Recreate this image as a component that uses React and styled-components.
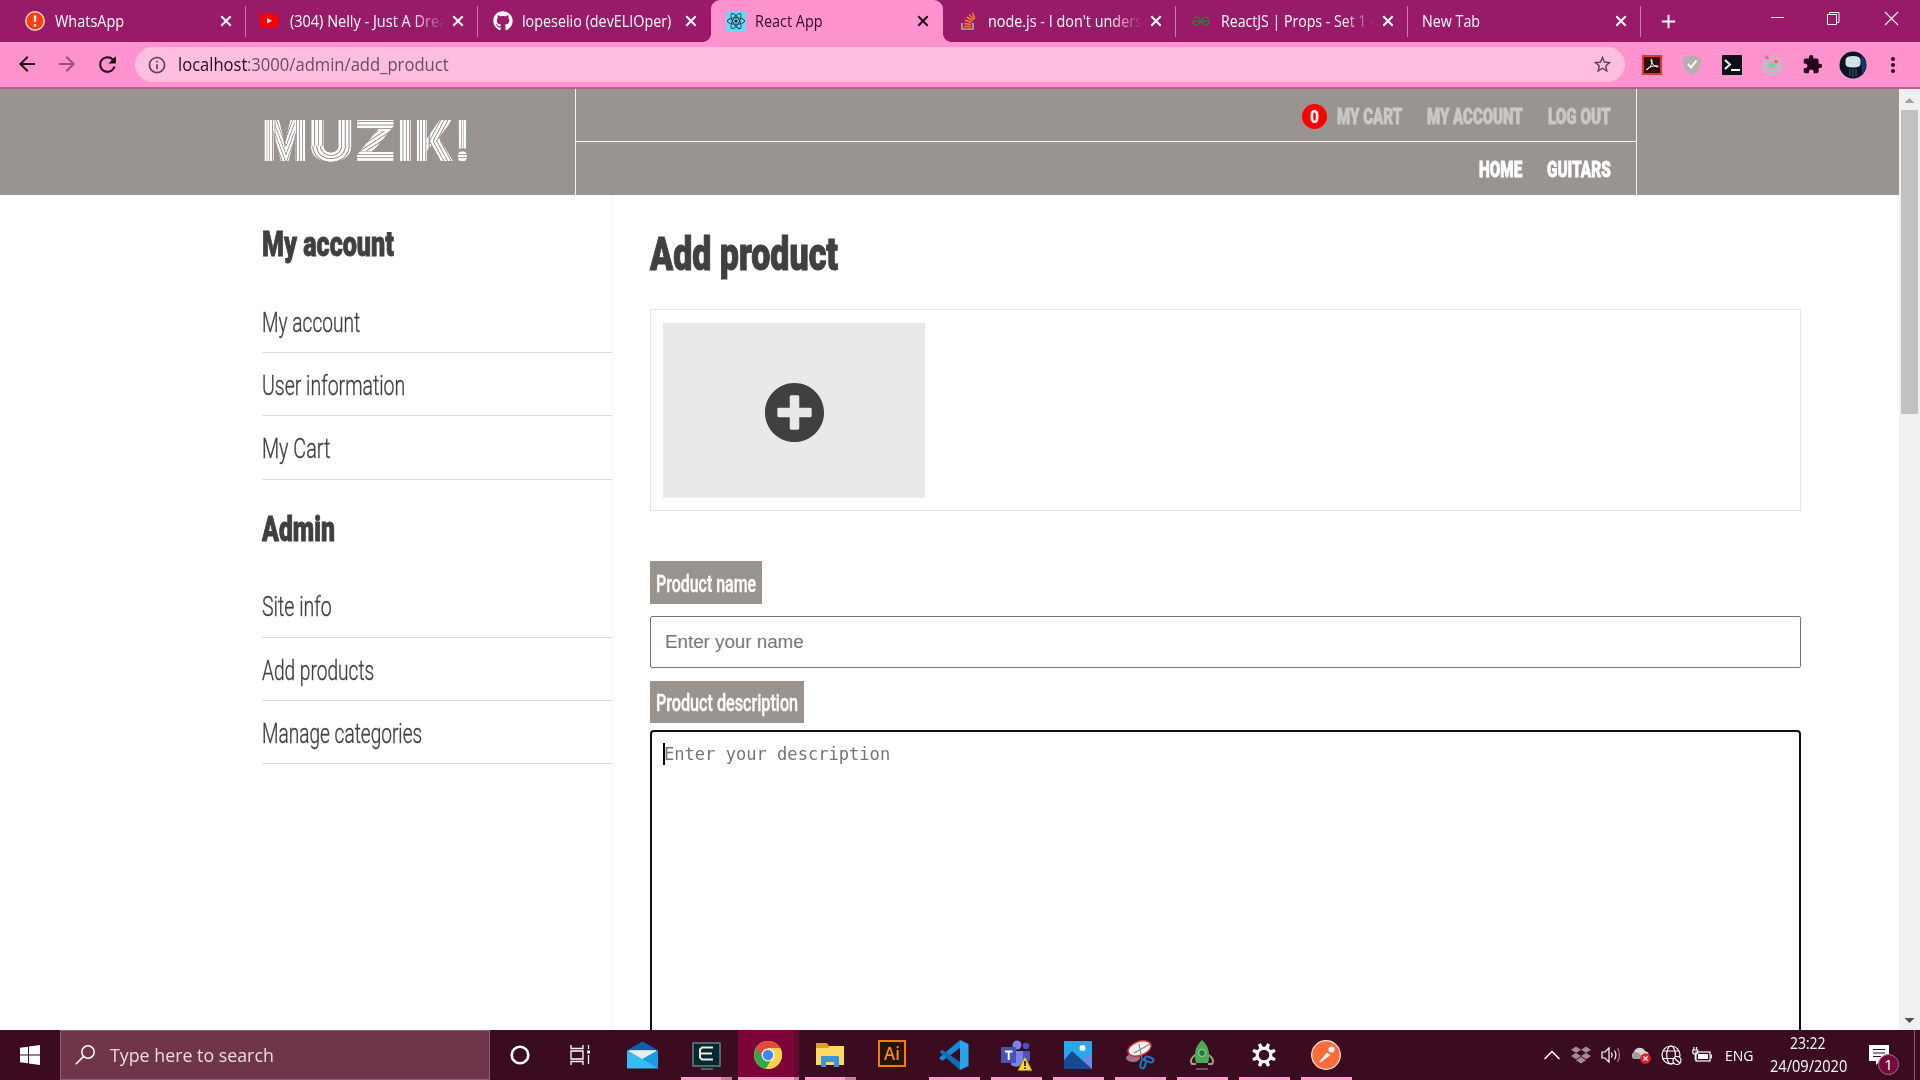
import React, { useLayoutEffect, useRef, useState } from "react";
import styled, { createGlobalStyle } from "styled-components";
import { FaPlusCircle, FaGithub, FaReact, FaDropbox } from "react-icons/fa";
import { MdArrowBack, MdArrowForward, MdRefresh, MdInfoOutline, MdStarBorder, MdAdd, MdMoreVert, MdExtension } from "react-icons/md";
import { SiGeeksforgeeks } from "react-icons/si";

const display = `Roboto, "Open Sans", "Liberation Sans", sans-serif`;
const system = `"Open Sans", "Noto Sans", "Liberation Sans", sans-serif`;

const Global = createGlobalStyle`
  * { box-sizing: border-box; }
  body { margin: 0; overflow: hidden; background: #fff; }
  svg { display: block; flex: none; }
`;

const Screen = styled.div`
  width: 1920px;
  height: 1080px;
  display: flex;
  flex-direction: column;
  overflow: hidden;
  background: #fff;
`;

/* Text condensed or widened to a set advance width */
const FitBox = styled.span`
  display: block;
  flex: none;
  width: ${(p) => p.$w}px;
  height: ${(p) => p.$lh}px;
  line-height: ${(p) => p.$lh}px;
  font-family: ${(p) => p.$font || display};
  font-size: ${(p) => p.$size}px;
  font-weight: ${(p) => p.$weight || 400};
  color: ${(p) => p.$color || "#404040"};
  white-space: pre;
`;
const FitInner = styled.span`
  display: inline-block;
  transform-origin: 0 50%;
  -webkit-text-stroke: ${(p) => p.$stroke || 0}px currentColor;
`;
function Fit({ w, lh, size, weight, color, font, stroke, children }) {
  const ref = useRef(null);
  const [scale, setScale] = useState(1);
  useLayoutEffect(() => {
    setScale(w / ref.current.offsetWidth);
  }, [w]);
  return (
    <FitBox $w={w} $lh={lh} $size={size} $weight={weight} $color={color} $font={font}>
      <FitInner ref={ref} $stroke={stroke} style={{ transform: `scaleX(${scale})` }}>{children}</FitInner>
    </FitBox>
  );
}

/* ---------- Browser tabs ---------- */
const TabStrip = styled.div`
  height: 42px;
  flex: none;
  display: flex;
  padding-left: 13px;
  background: #991a68;
`;
const Tab = styled.div`
  position: relative;
  width: 232.5px;
  height: 42px;
  flex: none;
  display: flex;
  align-items: center;
  padding-left: ${(p) => p.$pad}px;
  padding-right: 14px;
  color: ${(p) => (p.$active ? "#1c0613" : "#fff")};
  background: ${(p) => (p.$active ? "#ff93cf" : "transparent")};
  border-radius: 9px 9px 0 0;
  &::before, &::after {
    content: "";
    display: ${(p) => (p.$active ? "block" : "none")};
    position: absolute;
    bottom: 0;
    width: 8px;
    height: 8px;
  }
  &::before { left: -8px; background: radial-gradient(circle at 0 0, transparent 7.5px, #ff93cf 8px); }
  &::after { right: -8px; background: radial-gradient(circle at 100% 0, transparent 7.5px, #ff93cf 8px); }
`;
const Divider = styled.i`
  width: 1px;
  height: 31px;
  margin-left: -1px;
  margin-top: 1px;
  align-self: center;
  background: #c67ba9;
`;
const Favicon = styled.span`
  width: ${(p) => p.$w}px;
  display: flex;
  justify-content: center;
  flex: none;
`;
const TabTitle = styled.span`
  flex: 1;
  overflow: hidden;
  margin-right: 7px;
  ${(p) => p.$fade && "mask-image: linear-gradient(90deg, #000 78%, transparent 100%);"}
`;
const NewTab = styled.span`
  display: flex;
  align-items: center;
  color: #fff;
  padding-left: 16px;
  flex: 1;
`;
const WindowButtons = styled.div`
  display: flex;
  padding: 9px 20px 0 0;
  gap: 39px;
`;

/* ---------- Address bar ---------- */
const Toolbar = styled.div`
  height: 47px;
  flex: none;
  display: flex;
  align-items: center;
  padding: 0 7px 0 15px;
  background: #ff93cf;
  border-bottom: 2px solid #b26490;
`;
const NavButtons = styled.div`
  display: flex;
  gap: 16px;
  width: 120px;
  color: #23040f;
`;
const Faded = styled.span`opacity: 0.45;`;
const AddressField = styled.div`
  width: 1490px;
  height: 35px;
  border-radius: 18px;
  background: #ffbde0;
  display: flex;
  align-items: center;
  padding: 0 12px 0 12px;
  color: #5b4351;
`;
const UrlText = styled.span`
  display: flex;
  flex: 1;
  padding-left: 11px;
`;
const Extensions = styled.div`
  display: grid;
  grid-template-columns: repeat(7, 40.1px);
  place-items: center;
  padding-left: 7px;
`;

/* ---------- Page ---------- */
const Viewport = styled.div`
  height: 941px;
  flex: none;
  display: flex;
  overflow: hidden;
`;
const Page = styled.div`
  width: 1899px;
  height: 941px;
  overflow: hidden;
`;
const Scrollbar = styled.div`
  width: 21px;
  background: #f0f0f0;
  display: flex;
  flex-direction: column;
  align-items: center;
`;
const ScrollArrow = styled.i`
  width: 10px;
  height: 5px;
  margin: ${(p) => (p.$down ? "7px 0" : "9px 0 7px")};
  background: ${(p) => (p.$down ? "#505050" : "#a3a3a3")};
  clip-path: ${(p) => (p.$down ? "polygon(0 0, 100% 0, 50% 100%)" : "polygon(50% 0, 100% 100%, 0 100%)")};
`;
const Thumb = styled.i`
  width: 17px;
  height: 304px;
  margin-bottom: auto;
  background: #c1c1c1;
`;
const Header = styled.header`
  height: 106px;
  background: #999490;
  display: flex;
`;
const Brand = styled.div`
  width: 575px;
  padding: 19px 0 0 262px;
  display: flex;
`;
const HeaderNav = styled.nav`
  width: 1062px;
  border: solid #f4f4f3;
  border-width: 0 1px;
`;
const NavRow = styled.div`
  height: 53px;
  display: flex;
  justify-content: flex-end;
  align-items: flex-start;
  gap: 25px;
  padding-right: 25px;
  border-bottom: ${(p) => (p.$line ? "1px solid #fff" : "none")};
`;
const CartLink = styled.span`
  display: flex;
  gap: 10px;
`;
const CartCount = styled.span`
  width: 25px;
  height: 25px;
  margin-top: 15px;
  border-radius: 50%;
  background: #f00;
  display: flex;
  justify-content: center;
`;

const LogoCell = styled.span`
  width: ${(p) => p.$w}px;
  height: 66px;
  flex: none;
  font: 900 57px/66px Inter, "Liberation Sans", sans-serif;
  white-space: pre;
`;
const LogoLetter = styled.span`
  display: inline-block;
  height: 66px;
  transform-origin: 0 50%;
  color: transparent;
  background: ${(p) => p.$fill};
  -webkit-background-clip: text;
  background-clip: text;
`;
function Letter({ w, fill, children }) {
  const ref = useRef(null);
  const [scale, setScale] = useState(1);
  useLayoutEffect(() => setScale(w / ref.current.offsetWidth), [w]);
  return (
    <LogoCell $w={w}>
      <LogoLetter ref={ref} $fill={fill} style={{ transform: `scaleX(${scale})` }}>{children}</LogoLetter>
    </LogoCell>
  );
}
const bands = "#fff 0, #fff 1.8px, #a29d99 2.3px, #a29d99 2.8px, #fff 3.4px";
const stripes = (angle) => `repeating-linear-gradient(${angle}deg, ${bands})`;
const at = (image, x, y, w, h) => `${image} ${x} ${y} / ${w} ${h} no-repeat`;
const logo = [
  { ch: "M", w: 46, fill: [
    at(stripes(90), "0", "0", "28%", "100%"),
    at(stripes(90), "100%", "0", "28%", "100%"),
    at(stripes(66), "39%", "0", "23%", "100%"),
    at(stripes(114), "66%", "0", "23%", "100%"),
  ].join(", ") },
  { ch: "U", w: 46, fill: [
    at(stripes(90), "0", "0", "100%", "38px"),
    at(`repeating-radial-gradient(circle at 50% 0, ${bands})`, "0", "38px", "100%", "28px"),
  ].join(", ") },
  { ch: "Z", w: 43, fill: [
    at(stripes(0), "0", "0", "100%", "23px"),
    at(stripes(0), "0", "43px", "100%", "23px"),
    at(stripes(145), "0", "23px", "100%", "20px"),
  ].join(", ") },
  { ch: "I", w: 17, fill: stripes(90) },
  { ch: "K", w: 40, fill: [
    at(stripes(90), "0", "0", "38%", "100%"),
    at(stripes(120), "100%", "0", "62%", "33px"),
    at(stripes(60), "100%", "33px", "62%", "33px"),
  ].join(", ") },
  { ch: "!", w: 17, fill: [
    at(stripes(90), "0", "0", "100%", "42px"),
    at(stripes(0), "0", "42px", "100%", "24px"),
  ].join(", ") },
];

const Body = styled.div`
  display: flex;
  height: 835px;
`;
const Sidebar = styled.aside`
  width: 613px;
  flex: none;
  padding-left: 262px;
  border-right: 1px solid #f5f5f5;
`;
const SideHeading = styled.h2`
  height: 94.8px;
  margin: 0;
`;
const SideRow = styled.div`
  height: 63.3px;
  border-bottom: 1px solid #dcdcdc;
`;
const Content = styled.main`
  width: 1188px;
  flex: none;
  padding-left: 37px;
`;
const Title = styled.h1`
  margin: 0;
  height: 114px;
`;
const Uploads = styled.section`
  height: 202px;
  border: 1px solid #e3e3e3;
  padding: 13px 12px;
`;
const AddTile = styled.div`
  width: 262px;
  height: 175px;
  padding-top: 4px;
  background: #e9e9e9;
  display: flex;
  align-items: center;
  justify-content: center;
  color: #404040;
`;
const Label = styled.label`
  display: block;
  width: ${(p) => p.$w}px;
  height: ${(p) => p.$h}px;
  margin-top: ${(p) => p.$mt}px;
  padding-left: 6px;
  background: #999490;
`;
const Field = styled.div`
  height: 52px;
  margin-top: 12px;
  border: 1px solid #757575;
  border-radius: 2px;
  padding-left: 14px;
`;
const TextArea = styled.div`
  height: 400px;
  margin-top: 7px;
  border: 2px solid #101010;
  border-radius: 4px;
  padding: 11px 0 0 11px;
  display: flex;
`;
const Caret = styled.i`
  width: 2px;
  height: 22px;
  margin-right: -1px;
  background: #000;
`;

/* ---------- Taskbar ---------- */
const Taskbar = styled.footer`
  height: 50px;
  flex: none;
  display: flex;
  background: #3b0b20;
`;
const StartButton = styled.div`
  width: 60px;
  display: flex;
  align-items: center;
  justify-content: center;
`;
const SearchBox = styled.div`
  width: 430px;
  border: 1px solid #8f6073;
  background: #70344b;
  display: flex;
  align-items: center;
  gap: 15px;
  padding-left: 14px;
`;
const TaskItem = styled.div`
  position: relative;
  width: ${(p) => p.$w || 62}px;
  flex: none;
  display: flex;
  align-items: center;
  justify-content: center;
  &::before {
    content: "";
    position: absolute;
    z-index: 0;
    top: 0;
    left: 1px;
    width: 61px;
    height: 50px;
    background: linear-gradient(90deg, #7d0439 56px, #620930 56px);
    display: ${(p) => (p.$current ? "block" : "none")};
  }
  &::after {
    content: "";
    position: absolute;
    left: ${(p) => (p.$current ? 1 : 6)}px;
    bottom: 0;
    width: ${(p) => (p.$current ? 61 : 51)}px;
    height: 3px;
    background: ${(p) => (p.$stack ? `linear-gradient(90deg, #ff9fca ${p.$current ? 56 : 40}px, #c87f9f ${p.$current ? 56 : 40}px)` : "#ff9fca")};
    display: ${(p) => (p.$open ? "block" : "none")};
  }
  svg { position: relative; z-index: 1; }
`;
const Tray = styled.div`
  margin-left: auto;
  padding-right: 5px;
  display: flex;
  align-items: center;
  gap: 10px;
`;
const Language = styled.span`margin-left: 3px;`;
const Clock = styled.div`
  display: flex;
  flex-direction: column;
  align-items: center;
  width: 78px;
  margin-left: 5px;
`;
const Notices = styled.div`
  width: 46px;
  height: 50px;
  margin-left: 12px;
  padding: 14px 0 0 0;
  border-right: 1px solid #806070;
`;
const AiBadge = styled.span`
  width: 28px;
  height: 27px;
  margin-top: -3px;
  border: 2px solid #f57c00;
  background: #271400;
  display: flex;
  justify-content: center;
`;

const CloseX = () => (
  <svg width="12" height="12" viewBox="0 0 12 12" stroke="currentColor" strokeWidth="2"><path d="M1.300 1.300l9.400 9.400M10.700 1.300l-9.400 9.400" /></svg>
);

const WhatsAppIcon = () => (
  <svg width="20" height="20" viewBox="0 0 20 20"><circle cx="10" cy="10" r="9.2" fill="#ff3d0d" stroke="#ffd9c9" strokeWidth="1.5" /><path d="M10 4.5v6.5M10 13v2.4" stroke="#fff" strokeWidth="2.3" /></svg>
);
const YouTubeIcon = () => (
  <svg width="18" height="14" viewBox="0 0 18 14"><rect width="18" height="13.5" rx="3" fill="#f00" /><path d="M7 4l5 2.8L7 9.6z" fill="#fff" /></svg>
);
const ReactIcon = () => (
  <svg width="20" height="20" viewBox="0 0 20 20"><rect width="20" height="20" rx="2" fill="#61dafb" /><g transform="translate(1 1)"><FaReact size={18} color="#17232b" /></g></svg>
);
const StackIcon = () => (
  <svg width="15" height="18" viewBox="0 0 15 18" fill="none">
    <path d="M1 11v6h11v-6" stroke="#b7a4ae" strokeWidth="1.7" />
    <path d="M3 14.4h7M3.2 11.4l6.9 1M4 8.2l6.6 2.3M5.8 5l5.8 3.8M8.3 2.4l4.4 5.2M11.7.6l2 6.4" stroke="#f48024" strokeWidth="1.5" />
  </svg>
);

const tabs = [
  { title: "WhatsApp", w: 69, pad: 12, iw: 20, icon: <WhatsAppIcon /> },
  { title: "(304) Nelly - Just A Drea", w: 157, pad: 14, iw: 18, icon: <YouTubeIcon />, fade: true },
  { title: "lopeselio (devELIOper)", w: 149, pad: 15, iw: 20, icon: <FaGithub size={20} /> },
  { title: "React App", w: 68, pad: 15, iw: 20, icon: <ReactIcon />, active: true },
  { title: "node.js - I don't unders", w: 154, pad: 17, iw: 17, icon: <StackIcon />, fade: true },
  { title: "ReactJS | Props - Set 1 -", w: 154, pad: 16, iw: 18, icon: <SiGeeksforgeeks size={18} color="#2f7a44" />, fade: true },
  { title: "New Tab", w: 58, pad: 14, iw: 0 },
];

function Tabs() {
  return (
    <TabStrip>
      {tabs.map((t, i) => (
        <React.Fragment key={t.title}>
          <Tab $pad={t.pad} $active={t.active}>
            {t.icon && <Favicon $w={t.iw}>{t.icon}</Favicon>}
            <TabTitle $fade={t.fade} style={{ marginLeft: t.icon ? (i > 3 ? 45 : i > 0 ? 44 : 42) - t.pad - t.iw : 0 }}>
              <Fit w={t.w} size={15.500} lh={39} font={system} color={t.active ? "#2a0c1e" : "#fff"}>{t.title}</Fit>
            </TabTitle>
            <CloseX />
          </Tab>
          {i !== 2 && i !== 3 && <Divider />}
        </React.Fragment>
      ))}
      <NewTab><MdAdd size={23} /></NewTab>
      <WindowButtons>
        <svg width="18" height="18"><path d="M3 8.5h13" stroke="#fff" /></svg>
        <svg width="18" height="18" fill="none" stroke="#fff"><path d="M2.5 5.5h9v10h-9zM4.500 5.500v-2h9.500v10h-2.500" /></svg>
        <svg width="18" height="18" stroke="#fff" strokeWidth="1.1"><path d="M3 3l13 13M16 3L3 16" /></svg>
      </WindowButtons>
    </TabStrip>
  );
}

function AddressBar() {
  return (
    <Toolbar>
      <NavButtons>
        <MdArrowBack size={24} />
        <Faded><MdArrowForward size={24} /></Faded>
        <MdRefresh size={25} />
      </NavButtons>
      <AddressField>
        <MdInfoOutline size={20} />
        <UrlText>
          <Fit w={69} size={18} lh={33} font={system} color="#1d1018">localhost</Fit>
          <Fit w={202} size={18} lh={33} font={system} color="#6b4d60">:3000/admin/add_product</Fit>
        </UrlText>
        <MdStarBorder size={21} />
      </AddressField>
      <Extensions>
        <svg width="20" height="20" viewBox="0 0 20 20"><rect x="1" y="1" width="18" height="18" fill="#300b0e" stroke="#e5322d" strokeWidth="2" /><path d="M4.500 15c3-1 6-6 5.500-10-.3-1.500-1.300-.8-1 .5.800 3.500 3.500 6 6 6.500 1.500.2 1.500-1.200 0-1.200-3-.2-7.500 1-9.800 3-.8.800-1 1.200-.7 1.200z" fill="none" stroke="#fff" /></svg>
        <svg width="20" height="20" viewBox="0 0 20 20"><path d="M10 0l9 3c.3 8-2 13-9 17C3 16 .7 11 1 3z" fill="#b0b0ae" /><path d="M6 9l3 3.500 5.500-7" stroke="#fff" strokeWidth="2" fill="none" /></svg>
        <svg width="20" height="20" viewBox="0 0 20 20"><rect width="20" height="20" rx="1" fill="#0a1016" /><path d="M3 5l5 4.500L3 14M9 15h9" stroke="#fff" strokeWidth="2" fill="none" /></svg>
        <svg width="20" height="20" viewBox="0 0 20 20" fill="none" stroke="#8bd9b9" strokeWidth="1.400"><circle cx="10" cy="10.500" r="8.800" /><circle cx="10" cy="10.500" r="5.700" /><circle cx="10" cy="10.500" r="3" fill="#58e39c" stroke="none" /><circle cx="5" cy="2.500" r="1.600" fill="#ff5a3c" stroke="none" /><circle cx="14" cy="6.500" r="1.800" fill="#ff5a3c" stroke="none" /></svg>
        <MdExtension size={21} color="#28041a" />
        <svg width="28" height="28" viewBox="0 0 28 28"><circle cx="14" cy="14" r="13.500" fill="#0b1124" /><path d="M22 4a13.500 13.500 0 0 1 1 20z" fill="#173a62" /><path d="M6.500 9q0-4 7.500-4t7.500 4v4q0 3.500-7.500 3.500T6.500 13z" fill="#cfe0e8" /><path d="M11 18v7M14 18v8M17 18v7" stroke="#29465c" strokeWidth="1.600" /></svg>
        <MdMoreVert size={24} color="#28041a" />
      </Extensions>
    </Toolbar>
  );
}

const NavText = ({ w, color = "#c8c8c8", lh = 55, children }) => (
  <Fit w={w} size={22} lh={lh} weight={900} color={color} stroke={0.8}>{children}</Fit>
);

function SiteHeader() {
  return (
    <Header>
      <Brand>
        {logo.map((l) => <Letter key={l.ch} w={l.w} fill={l.fill}>{l.ch}</Letter>)}
      </Brand>
      <HeaderNav>
        <NavRow $line>
          <CartLink>
            <CartCount><Fit w={9} size={19} lh={25} weight={900} color="#fff">0</Fit></CartCount>
            <NavText w={65}>MY CART</NavText>
          </CartLink>
          <NavText w={96}>MY ACCOUNT</NavText>
          <NavText w={63}>LOG OUT</NavText>
        </NavRow>
        <NavRow>
          <NavText w={43} color="#fff">HOME</NavText>
          <NavText w={64} color="#fff">GUITARS</NavText>
        </NavRow>
      </HeaderNav>
    </Header>
  );
}

const menus = [
  { heading: ["My account", 132], rows: [["My account", 98], ["User information", 143], ["My Cart", 68]] },
  { heading: ["Admin", 73], rows: [["Site info", 70], ["Add products", 112], ["Manage categories", 160]] },
];

function SideMenu() {
  return (
    <Sidebar>
      {menus.map(({ heading, rows }) => (
        <React.Fragment key={heading[0]}>
          <SideHeading><Fit w={heading[1]} size={35} lh={100} weight={900} stroke={0.9}>{heading[0]}</Fit></SideHeading>
          {rows.map(([text, w]) => (
            <SideRow key={text}><Fit w={w} size={28.500} lh={66} weight={300} stroke={0.35}>{text}</Fit></SideRow>
          ))}
        </React.Fragment>
      ))}
    </Sidebar>
  );
}

function ProductForm() {
  return (
    <Content>
      <Title><Fit w={188} size={47} lh={117} weight={900} stroke={1.1}>Add product</Fit></Title>
      <Uploads><AddTile><FaPlusCircle size={61} /></AddTile></Uploads>
      <Label $w={112} $h={43} $mt={50}><Fit w={100} size={23} lh={48} weight={500} stroke={0.4} color="#fff">Product name</Fit></Label>
      <Field><Fit w={139} size={18.75} lh={49} color="#757575" font={`"Liberation Sans", Arial, sans-serif`}>Enter your name</Fit></Field>
      <Label $w={154} $h={42} $mt={13}><Fit w={142} size={23} lh={45} weight={500} stroke={0.4} color="#fff">Product description</Fit></Label>
      <TextArea>
        <Caret />
        <Fit w={226} size={17} lh={22} color="#757575" font={`"DejaVu Sans Mono", monospace`}>Enter your description</Fit>
      </TextArea>
    </Content>
  );
}

function Desktop() {
  return (
    <Taskbar>
      <StartButton>
        <svg width="20" height="20" viewBox="0 0 20 20" fill="#fff"><path d="M0 2.800l8-1.100v7.800H0zM9 1.500L20 0v9.500H9zM0 10.500h8v7.800l-8-1.100zM9 10.500h11V20L9 18.500z" /></svg>
      </StartButton>
      <SearchBox>
        <svg width="20" height="20" viewBox="0 0 20 20" fill="none" stroke="#fff" strokeWidth="1.500"><circle cx="13" cy="7" r="6.200" /><path d="M8.600 11.400L.8 19.300" /></svg>
        <Fit w={164} size={19} lh={47} font={system} color="#eadbe2">Type here to search</Fit>
      </SearchBox>
      <TaskItem $w={60}><svg width="20" height="20"><circle cx="10" cy="10" r="8.300" fill="none" stroke="#fff" strokeWidth="2.600" /></svg></TaskItem>
      <TaskItem $w={60}><svg width="20" height="20" fill="none" stroke="#fff" strokeWidth="1.300"><path d="M1 0v3.500h12V0M1 20v-3.500h12V20M1 6h12v8H1zM18.500 0v4M18.500 10v9" /><path d="M17.200 5.500h3v3h-3z" fill="#fff" stroke="none" /></svg></TaskItem>
      <TaskItem $w={65}><svg width="31" height="28" viewBox="0 0 32 28"><path d="M0 9L16 0l16 9v6H0z" fill="#0b5fb5" /><path d="M2 9h28v13H2z" fill="#ededed" /><path d="M0 9l16 9L32 9v19H0z" fill="#35bdf2" /><path d="M16 18l16 10V9z" fill="#1b9ae4" /></svg></TaskItem>
      <TaskItem $open $stack><svg width="29" height="29" viewBox="0 0 29 29"><rect x="1" y="2" width="27" height="23" fill="#022a35" stroke="#5f8583" strokeWidth="1.500" /><path d="M21 6.500H10L8 8.500v8l2 2h11M8 12.500h12" stroke="#f0e9d2" strokeWidth="2" fill="none" /><path d="M9 28h12" stroke="#4c8080" strokeWidth="1.500" /></svg></TaskItem>
      <TaskItem $open $stack $current>
        <svg width="28" height="28" viewBox="0 0 28 28"><circle cx="14" cy="14" r="14" fill="#fdd24b" /><path d="M14 14L1.900 7A14 14 0 0 0 12 27.800L18.500 17z" fill="#2fa650" /><path d="M1.900 7a14 14 0 0 1 24.200 0H14v7l-5 3z" fill="#e24a3b" /><path d="M26.100 7A14 14 0 0 1 12 27.800L20 14 17.500 8 14 7z" fill="#fdd24b" /><circle cx="14" cy="14" r="6.500" fill="#fff" /><circle cx="14" cy="14" r="5.200" fill="#4385f5" /></svg>
      </TaskItem>
      <TaskItem $open $stack><svg width="28" height="24" viewBox="0 0 28 24"><path d="M0 0h11l2 3h14v8H0z" fill="#dfa01a" /><path d="M0 5h12l2-2h14v19H0z" fill="#ffd866" /><path d="M5 24V14q0-1 1-1h16q1 0 1 1v10h-5v-5h-8v5z" fill="#3a93dd" /></svg></TaskItem>
      <TaskItem><AiBadge><Fit w={16} size={18} lh={23} weight={600} color="#f88b12" font={system}>Ai</Fit></AiBadge></TaskItem>
      <TaskItem $open><svg width="30" height="30" viewBox="0 0 30 30"><path d="M21 0v8L4 20.500 2.500 20.500.5 18.500v-1z" fill="#1789d5" /><path d="M.5 12l2-2h1.500L21 22v8z" fill="#0b70b8" /><path d="M21 0l8.500 4v22L21 30z" fill="#29a3ee" /></svg></TaskItem>
      <TaskItem $open><svg width="31" height="31" viewBox="0 0 31 31"><circle cx="16" cy="5" r="4.500" fill="#7b83eb" /><circle cx="25" cy="6" r="3.200" fill="#4b53bc" /><path d="M20 11h9v9q-3 5-9 3z" fill="#4b53bc" /><path d="M9 11h13v10q-4 9-12 4z" fill="#7b83eb" /><rect y="7" width="15" height="16" rx="1" fill="#4951b8" /><path d="M4 11.500h7.500M7.700 11.500v8.500" stroke="#fff" strokeWidth="2" /><path d="M24 17l7 13.500H17z" fill="#ffd91c" stroke="#a98900" strokeWidth=".6" /><path d="M24 21v5M24 27.500v1.500" stroke="#111" strokeWidth="1.700" /></svg></TaskItem>
      <TaskItem $open><svg width="28" height="28" viewBox="0 0 28 28"><rect width="28" height="28" rx="1" fill="#27a8ea" /><path d="M15 28l8-16 5 5v11z" fill="#6e86e8" /><path d="M0 19l8-9 20 18H0z" fill="#17498e" /><circle cx="18.500" cy="7" r="3" fill="#fff" /></svg></TaskItem>
      <TaskItem $open><svg width="30" height="30" viewBox="0 0 30 30"><ellipse cx="8" cy="18" rx="7" ry="4" fill="#9a7785" /><ellipse cx="14.500" cy="8.500" rx="12" ry="7" transform="rotate(-20 14.500 8.500)" fill="#f6f0f0" stroke="#d52c38" strokeWidth="1.500" /><path d="M14 4l3 15M25 4L9 13" stroke="#8b8b8b" strokeWidth="1.200" /><ellipse cx="18" cy="24" rx="2.400" ry="4.500" transform="rotate(15 18 24)" fill="none" stroke="#1d78c4" strokeWidth="2" /><ellipse cx="24" cy="19.500" rx="4.500" ry="2.400" transform="rotate(20 24 19.500)" fill="none" stroke="#1d78c4" strokeWidth="2" /></svg></TaskItem>
      <TaskItem $open><svg width="24" height="30" viewBox="0 0 24 30"><path d="M5 15q-6 5-3 9h4M19 15q6 5 3 9h-4" stroke="#9da27d" strokeWidth="2" fill="none" /><path d="M12 0q10 9 6 23H6Q2 9 12 0z" fill="#48ad51" /><circle cx="12" cy="13" r="3.500" fill="#247a34" stroke="#b5d2a8" /><path d="M6 29h12" stroke="#74515f" strokeWidth="2" /></svg></TaskItem>
      <TaskItem $open><svg width="24" height="24" viewBox="0 0 24 24"><circle cx="12" cy="12" r="6.800" fill="none" stroke="#fff" strokeWidth="3" />{[0, 45, 90, 135, 180, 225, 270, 315].map((a) => <path key={a} d="M10 4.500l.5-4.500h3l.5 4.500z" fill="#fff" transform={`rotate(${a + 22.5} 12 12)`} />)}</svg></TaskItem>
      <TaskItem $open><svg width="30" height="30" viewBox="0 0 30 30"><circle cx="15" cy="15" r="14.300" fill="#ff6c37" stroke="#ffe9df" strokeWidth="1.200" /><path d="M7 23l9-11 4 3-10 7.500z" fill="#fff" stroke="#d9562b" strokeWidth=".6" /><circle cx="20.500" cy="9.500" r="3" fill="#fff" /></svg></TaskItem>
      <Tray>
        <svg width="18" height="18" fill="none" stroke="#fff" strokeWidth="1.500"><path d="M1.500 13L9 5.500 16.500 13" /></svg>
        <FaDropbox size={20} color="#a48b97" />
        <svg width="20" height="18" viewBox="0 0 20 18" fill="none" stroke="#fff" strokeWidth="1.200"><path d="M1 6h3l4-4v14l-4-4H1z" /><path d="M10.500 6.500q1.500 2.500 0 5M13.500 4.500q2.800 4.500 0 9" /><path d="M16.500 2q4 7 0 14" stroke="#9b7f8b" /></svg>
        <svg width="20" height="18" viewBox="0 0 20 18"><path d="M3 13a4 4 0 0 1 0-7 6 6 0 0 1 11-1 5 5 0 0 1 3 8z" fill="#d9d2d6" /><path d="M3 13a4 4 0 0 1 1-7q5 0 8 7z" fill="#a69ba1" /><circle cx="14.500" cy="12.500" r="5.300" fill="#e11f2d" /><path d="M12.500 10.500l4 4M16.500 10.500l-4 4" stroke="#fff" strokeWidth="1.300" /></svg>
        <svg width="21" height="20" viewBox="0 0 21 20" fill="none" stroke="#fff" strokeWidth="1.200"><circle cx="10" cy="10" r="9" /><ellipse cx="10" cy="10" rx="4.300" ry="9" /><path d="M2 6h16M2 13.500h12" /><circle cx="16" cy="15.500" r="4" fill="#3b0b20" /><path d="M13.300 13l5.400 5" /></svg>
        <svg width="20" height="16" viewBox="0 0 20 16" fill="none" stroke="#fff" strokeWidth="1.200"><rect x="4" y="5" width="14" height="9" /><rect x="6" y="7" width="10" height="5" fill="#fff" stroke="none" /><path d="M19.300 7.500v4M.8 3h5v3q-2.500 2.500-5 0zM2 0v3M4.600 0v3M3.300 8v5" /></svg>
        <Language><Fit w={29} size={15} lh={40} font={system} color="#fff">ENG</Fit></Language>
        <Clock>
          <Fit w={36} size={15.500} lh={23} font={system} color="#fff">23:22</Fit>
          <Fit w={77} size={15.500} lh={23} font={system} color="#fff">24/09/2020</Fit>
        </Clock>
        <Notices>
          <svg width="32" height="32" viewBox="0 0 32 32"><path d="M0 1h20v16H11l-4 4v-4H0z" fill="#fff" /><path d="M4 5.500h12M4 9h12M4 12.500h8" stroke="#3b0b20" strokeWidth="1.200" /><circle cx="19.500" cy="20.500" r="10" fill="#75093b" stroke="#a8718a" /><text x="19.500" y="26" textAnchor="middle" fontFamily="Open Sans, sans-serif" fontSize="15" fill="#fff">1</text></svg>
        </Notices>
      </Tray>
    </Taskbar>
  );
}

export default function App() {
  return (
    <Screen>
      <Global />
      <Tabs />
      <AddressBar />
      <Viewport>
        <Page>
          <SiteHeader />
          <Body>
            <SideMenu />
            <ProductForm />
          </Body>
        </Page>
        <Scrollbar>
          <ScrollArrow />
          <Thumb />
          <ScrollArrow $down />
        </Scrollbar>
      </Viewport>
      <Desktop />
    </Screen>
  );
}
